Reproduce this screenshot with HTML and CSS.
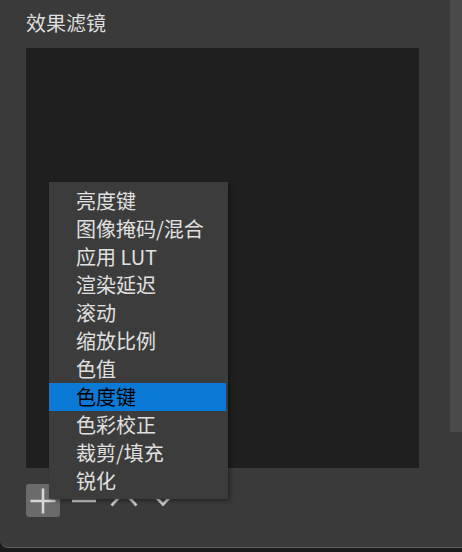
FILE: index.html
```html
<!DOCTYPE html>
<html lang="zh-CN">
<head>
<meta charset="utf-8">
<link rel="stylesheet" href="styles.css">
</head>
<body>
<div class="window">
  <div class="main">
    <div class="title">效果滤镜</div>
    <div class="list"></div>
    <div class="toolbar">
      <div class="btn btn-add">
        <svg width="34" height="33" viewBox="0 0 34 33"><path d="M17 4.5V29.5M4.5 17H29.5" stroke="#d6d6d6" stroke-width="2.6" fill="none"/></svg>
      </div>
      <div class="btn">
        <svg width="26" height="33" viewBox="0 0 26 33"><path d="M1 17H25" stroke="#c4c4c4" stroke-width="2.6" fill="none"/></svg>
      </div>
      <div class="btn">
        <svg width="28" height="33" viewBox="0 0 28 33"><path d="M1.5 21.5L14 8L26.5 21.5" stroke="#c4c4c4" stroke-width="2.8" fill="none"/></svg>
      </div>
      <div class="btn">
        <svg width="22" height="33" viewBox="0 0 22 33"><path d="M2 11L11 20.5L20 11" stroke="#c4c4c4" stroke-width="2.8" fill="none"/></svg>
      </div>
    </div>
  </div>
  <div class="scrollstrip"></div>
  <div class="menu">
    <div class="item">亮度键</div>
    <div class="item">图像掩码/混合</div>
    <div class="item">应用 LUT</div>
    <div class="item">渲染延迟</div>
    <div class="item">滚动</div>
    <div class="item">缩放比例</div>
    <div class="item">色值</div>
    <div class="item active">色度键</div>
    <div class="item">色彩校正</div>
    <div class="item">裁剪/填充</div>
    <div class="item">锐化</div>
  </div>
</div>
</body>
</html>
```

FILE: styles.css
```css
html, body {
  margin: 0;
  padding: 0;
}
body {
  background: #1a1a1a;
  width: 462px;
  height: 552px;
  overflow: hidden;
  font-family: "Noto Sans CJK SC", "Noto Sans", sans-serif;
}
.window {
  position: relative;
  width: 462px;
  height: 547px;
  background: #3a3a3a;
  border-bottom: 1px solid #5c5c5c;
  border-bottom-left-radius: 8px;
  display: flex;
  align-items: flex-start;
}
.main {
  flex: 1;
  padding-left: 26px;
}
.title {
  margin-top: 11px;
  height: 37px;
  font-size: 20px;
  line-height: 24px;
  color: #dedede;
}
.list {
  width: 393px;
  height: 420px;
  background: #201f1f;
}
.toolbar {
  margin-top: 16px;
  display: flex;
  align-items: center;
  gap: 10px;
  height: 33px;
}
.btn {
  display: flex;
  height: 33px;
  align-items: center;
}
.btn svg {
  display: block;
}
.btn-add {
  width: 34px;
  background: #6b6b6b;
  border-radius: 3px;
  margin-right: 1px;
}
.toolbar .btn:nth-child(3) {
  margin-left: 3px;
}
.toolbar .btn:nth-child(4) {
  margin-left: 4px;
}
.scrollstrip {
  width: 12px;
  height: 432px;
  background: #4a4a4a;
}
.menu {
  position: absolute;
  left: 49px;
  top: 182px;
  width: 179px;
  padding: 5px 0 4px;
  background: #3c3c3c;
  box-shadow: 2px 2px 4px rgba(0, 0, 0, 0.35);
}
.item {
  height: 28px;
  line-height: 28px;
  padding-left: 27px;
  margin-right: 2px;
  font-size: 20px;
  color: #e0e0e0;
  white-space: nowrap;
}
.item.active {
  background: #0a7ad6;
  color: #000;
}
```
